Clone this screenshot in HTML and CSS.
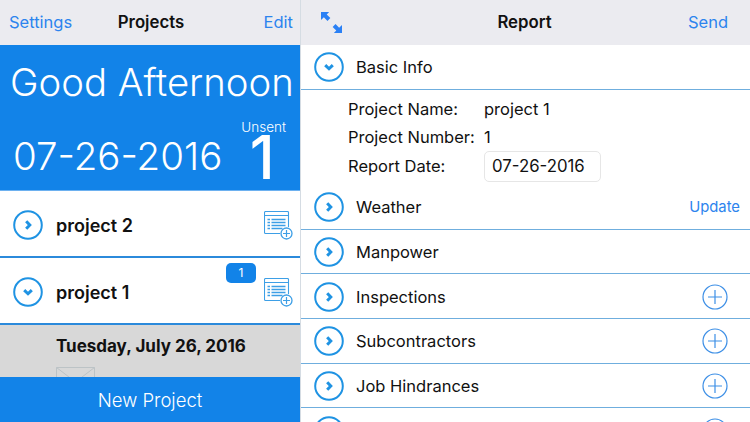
FILE: index.html
```html
<!DOCTYPE html>
<html lang="en">
<head>
    <meta charset="UTF-8">
    <meta name="viewport" content="width=device-width, initial-scale=1.0">
    <title>Projects</title>
    <link rel="stylesheet" href="styles.css">
</head>
<body>
    <svg class="defs" width="0" height="0">
        <symbol id="right" viewBox="0 0 30 30">
            <circle cx="15" cy="15" r="13.8" fill="none" stroke="currentColor" stroke-width="2"/>
            <path d="M13.200 11.200l3.600 3.800-3.600 3.800" fill="none" stroke="currentColor" stroke-width="3"/>
        </symbol>
        <symbol id="down" viewBox="0 0 30 30">
            <circle cx="15" cy="15" r="13.8" fill="none" stroke="currentColor" stroke-width="2"/>
            <path d="M11.200 13.200l3.800 3.600 3.800-3.600" fill="none" stroke="currentColor" stroke-width="3"/>
        </symbol>
        <symbol id="plus" viewBox="0 0 26 26">
            <circle cx="13" cy="13" r="12" fill="none" stroke="currentColor" stroke-width="1.2"/>
            <path d="M13 6v14M6 13h14" fill="none" stroke="currentColor" stroke-width="1.2"/>
        </symbol>
        <symbol id="report" viewBox="0 0 29 29">
            <path d="M24.500 16V1.500a1 1 0 0 0-1-1H1.500a1 1 0 0 0-1 1v20a1 1 0 0 0 1 1H16M.5 4.500h24" fill="none" stroke="currentColor" stroke-width="1.100"/>
            <path d="M7.500 8.500h14M7.500 11.500h14M7.500 14.500h14M7.500 17.500h11M3.500 8.500h2.500M3.500 11.500h2.500M3.500 14.500h2.500M3.500 17.500h2.500" fill="none" stroke="currentColor" stroke-width="1.500"/>
            <circle cx="22.500" cy="22.500" r="5.500" fill="#fff" stroke="currentColor" stroke-width="1.300"/>
            <path d="M22.500 19v7M19 22.500h7" fill="none" stroke="currentColor" stroke-width="1.200"/>
        </symbol>
    </svg>

    <div class="app">
        <div class="left">
            <div class="topbar">
                <a class="link">Settings</a>
                <b class="title">Projects</b>
                <a class="link link-end">Edit</a>
            </div>
            <div class="hero">
                <div class="greeting">Good Afternoon</div>
                <div class="hero-row">
                    <div class="hero-date">07-26-2016</div>
                    <div class="unsent">
                        <div class="unsent-label">Unsent</div>
                        <div class="unsent-count">1</div>
                    </div>
                </div>
            </div>
            <div class="project">
                <svg class="toggle"><use href="#right"/></svg>
                <div class="project-name">project 2</div>
                <svg class="report-icon"><use href="#report"/></svg>
            </div>
            <div class="project">
                <svg class="toggle"><use href="#down"/></svg>
                <div class="project-name">project 1</div>
                <span class="badge">1</span>
                <svg class="report-icon"><use href="#report"/></svg>
            </div>
            <div class="day">
                <div class="day-title">Tuesday, July 26, 2016</div>
                <svg class="envelope" viewBox="0 0 40 20">
                    <path d="M.5 20V.5h38V20M.5 .5L19.500 15 38.500 .5" fill="none" stroke="#bcc3c6"/>
                </svg>
            </div>
            <div class="new-project">New Project</div>
        </div>

        <div class="right">
            <div class="topbar topbar-report">
                <svg class="expand" viewBox="0 0 22 22">
                    <path d="M0 0h8.500L6 2.600l3.800 3.800-3 3L3 5.600 0 8.500zM22 22h-8.500l2.500-2.600-3.800-3.800 3-3 3.800 3.800 3-2.900z" fill="currentColor"/>
                </svg>
                <b class="title">Report</b>
                <a class="link link-end">Send</a>
            </div>
            <div class="section">
                <svg class="toggle"><use href="#down"/></svg>
                <span class="section-name">Basic Info</span>
            </div>
            <div class="details">
                <div class="detail"><span class="detail-label">Project Name:</span><span>project 1</span></div>
                <div class="detail"><span class="detail-label">Project Number:</span><span>1</span></div>
                <div class="detail"><span class="detail-label">Report Date:</span><span class="date-box">07-26-2016</span></div>
            </div>
            <div class="section">
                <svg class="toggle"><use href="#right"/></svg>
                <span class="section-name">Weather</span>
                <a class="update">Update</a>
            </div>
            <div class="section">
                <svg class="toggle"><use href="#right"/></svg>
                <span class="section-name">Manpower</span>
            </div>
            <div class="section">
                <svg class="toggle"><use href="#right"/></svg>
                <span class="section-name">Inspections</span>
                <svg class="add"><use href="#plus"/></svg>
            </div>
            <div class="section">
                <svg class="toggle"><use href="#right"/></svg>
                <span class="section-name">Subcontractors</span>
                <svg class="add"><use href="#plus"/></svg>
            </div>
            <div class="section">
                <svg class="toggle"><use href="#right"/></svg>
                <span class="section-name">Job Hindrances</span>
                <svg class="add"><use href="#plus"/></svg>
            </div>
            <div class="section">
                <svg class="toggle"><use href="#right"/></svg>
                <span class="section-name"></span>
                <svg class="add"><use href="#plus"/></svg>
            </div>
        </div>
    </div>
</body>
</html>
```

FILE: styles.css
```css
body {
    font-family: Inter, "Liberation Sans", sans-serif;
    margin: 0;
    padding: 0;
    overflow: hidden;
    background-color: #fff;
    color: #111;
}
.defs {
    display: block;
    height: 0;
}
.app {
    display: flex;
    width: 750px;
    height: 422px;
    overflow: hidden;
}
.left {
    display: flex;
    flex-direction: column;
    width: 300px;
    flex: none;
}
.right {
    flex: 1;
    min-width: 0;
    border-left: 1px solid #d5dce3;
}
.topbar {
    display: grid;
    grid-template-columns: 1fr auto 1fr;
    align-items: center;
    height: 45px;
    box-sizing: border-box;
    padding: 0 7px 1px 9px;
    background-color: #ebebf0;
    flex: none;
}
.topbar-report {
    padding: 0 22px 1px 20px;
}
.link {
    color: #2c84ee;
    font-size: 16.500px;
}
.link-end {
    justify-self: end;
}
.title {
    font-size: 16.800px;
    font-weight: 600;
}
.hero {
    height: 146px;
    box-sizing: border-box;
    flex: none;
    padding: 15px 5px 0 10px;
    background-color: #1283e8;
    border-bottom: 1px solid #6db1f0;
    color: #fff;
}
.greeting {
    font-size: 38.300px;
    line-height: 44px;
    font-weight: 350;
    white-space: nowrap;
}
.hero-row {
    display: flex;
    justify-content: space-between;
    padding: 0 9px 0 3px;
    margin-top: 15px;
}
.hero-date {
    font-size: 38.500px;
    line-height: 44px;
    font-weight: 350;
    margin-top: 15px;
}
.unsent {
    display: flex;
    flex-direction: column;
    align-items: center;
}
.unsent-label {
    font-size: 13.500px;
    line-height: 16px;
    font-weight: 300;
}
.unsent-count {
    font-size: 60px;
    line-height: 44px;
    font-weight: 500;
    margin-right: 3px;
}
.project {
    position: relative;
    display: flex;
    align-items: center;
    height: 67px;
    box-sizing: border-box;
    flex: none;
    padding: 3px 7px 0 13px;
    border-bottom: 2px solid #2b8adb;
}
.toggle {
    width: 30px;
    height: 30px;
    flex: none;
    color: #1f93e3;
}
.project-name {
    flex: 1;
    margin-left: 13px;
    font-size: 18px;
    font-weight: 600;
}
.report-icon {
    width: 29px;
    height: 29px;
    color: #3d9fe6;
}
.badge {
    position: absolute;
    top: 5px;
    right: 44px;
    width: 30px;
    height: 20px;
    border-radius: 5px;
    background-color: #1283e8;
    color: #fff;
    font-size: 12px;
    line-height: 20px;
    text-align: center;
}
.day {
    flex: 1;
    min-height: 0;
    overflow: hidden;
    padding-left: 56px;
    background-color: #d8d8d8;
}
.day-title {
    margin-top: 10px;
    font-size: 17px;
    line-height: 22px;
    font-weight: 700;
}
.envelope {
    display: block;
    width: 40px;
    height: 20px;
    margin-top: 10px;
}
.new-project {
    height: 45px;
    flex: none;
    background-color: #1283e8;
    color: #fff;
    font-size: 18.500px;
    font-weight: 300;
    line-height: 46px;
    text-align: center;
}
.expand {
    width: 21px;
    height: 21px;
    color: #2a80f5;
}
.section {
    display: flex;
    align-items: center;
    height: 44.670px;
    box-sizing: border-box;
    padding: 1px 10px 0 13px;
    border-bottom: 1px solid #6faede;
}
.section-name {
    flex: 1;
    margin-left: 12px;
    font-size: 16.500px;
}
.update {
    color: #2c84ee;
    font-size: 14.800px;
}
.add {
    width: 26px;
    height: 26px;
    margin-right: 12px;
    color: #3d8fe6;
}
.details {
    height: 95.500px;
    box-sizing: border-box;
    padding: 5px 0 0 47px;
    font-size: 16.500px;
}
.detail {
    display: flex;
    align-items: center;
    height: 28.500px;
}
.detail-label {
    width: 136px;
    flex: none;
}
.date-box {
    width: 117px;
    height: 31px;
    box-sizing: border-box;
    margin-top: 2px;
    padding-left: 7px;
    border: 1px solid #e6e6e6;
    border-radius: 5px;
    font-size: 16.800px;
    line-height: 29px;
}
```
